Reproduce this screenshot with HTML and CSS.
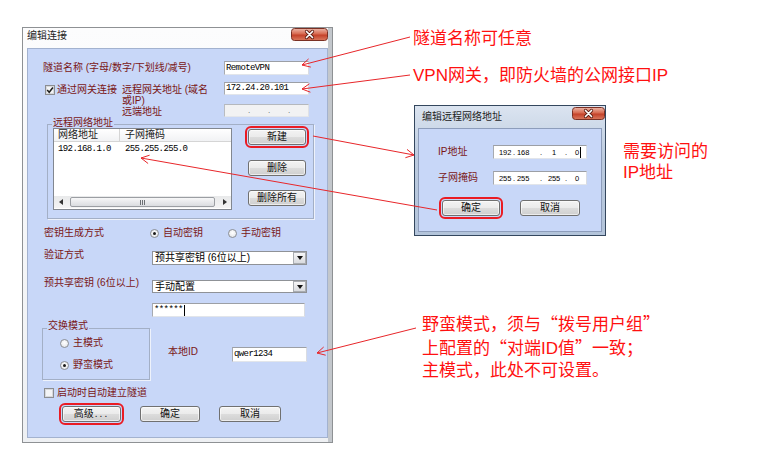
FILE: index.html
```html
<!DOCTYPE html>
<html lang="zh-CN">
<head>
<meta charset="utf-8">
<title>编辑连接</title>
<link rel="stylesheet" href="styles.css">
</head>
<body>
<div class="canvas">

  <section class="win win-main">
    <header class="titlebar">
      <span class="title">编辑连接</span>
      <span class="close close-main">
        <svg width="37" height="13" viewBox="0 0 37 13">
          <defs>
            <linearGradient id="cg1" x1="0" y1="0" x2="0" y2="1">
              <stop offset="0" stop-color="#ecb7a9"/>
              <stop offset="0.45" stop-color="#d86a50"/>
              <stop offset="0.55" stop-color="#c4422a"/>
              <stop offset="1" stop-color="#db7a5f"/>
            </linearGradient>
          </defs>
          <rect x="0.5" y="0.5" width="36" height="12" rx="3" fill="url(#cg1)" stroke="#7a3024"/>
          <path d="M15.5 3.5 L21.5 9.5 M21.5 3.5 L15.5 9.5" stroke="#5b1c12" stroke-width="3.2" stroke-linecap="round"/>
          <path d="M15.5 3.5 L21.5 9.5 M21.5 3.5 L15.5 9.5" stroke="#fff" stroke-width="1.7" stroke-linecap="round"/>
        </svg>
      </span>
    </header>

    <div class="panel">
      <div class="top-grid">
        <div class="lbl l-name">隧道名称 (字母/数字/下划线/减号)</div>
        <div class="field mono f-name">RemoteVPN</div>
        <div class="check-line r-gw">
          <span class="chk">
            <svg width="10" height="10" viewBox="0 0 10 10"><rect x="0.5" y="0.5" width="9" height="9" fill="#fff" stroke="#8b8d91"/><rect x="1.5" y="1.5" width="7" height="7" fill="#f3f4f6" stroke="#d6d8dc"/><path d="M2.2 5 L4.2 7.3 L7.9 2.5" fill="none" stroke="#1d1d1d" stroke-width="1.5"/></svg>
          </span>
          <span class="lbl">通过网关连接</span>
        </div>
        <div class="lbl l-gw">远程网关地址 (域名<br>或IP)<br>远端地址</div>
        <div class="field mono f-gw">172.24.20.101</div>
        <div class="field f-remote"><span>.</span><span>.</span><span>.</span></div>
      </div>

      <fieldset class="grp grp-net">
        <legend>远程网络地址</legend>
        <div class="net-body">
          <div class="listview">
            <div class="lv-head"><span class="c1">网络地址</span><span class="c2">子网掩码</span></div>
            <div class="lv-row mono"><span class="c1">192.168.1.0</span><span class="c2">255.255.255.0</span></div>
            <div class="lv-space"></div>
            <div class="hscroll">
              <span class="sb-btn"><svg width="4" height="6" viewBox="0 0 4 6"><path d="M4 0 L0 3 L4 6 Z" fill="#333"/></svg></span>
              <span class="sb-thumb"><svg width="6" height="5" viewBox="0 0 6 5"><path d="M0.5 0 V5 M2.5 0 V5 M4.5 0 V5" stroke="#6d7075" stroke-width="1"/></svg></span>
              <span class="sb-btn"><svg width="4" height="6" viewBox="0 0 4 6"><path d="M0 0 L4 3 L0 6 Z" fill="#333"/></svg></span>
            </div>
          </div>
          <div class="btn-col">
            <button class="btn b-new hl">新建</button>
            <button class="btn b-del">删除</button>
            <button class="btn b-delall">删除所有</button>
          </div>
        </div>
      </fieldset>

      <div class="key-grid">
        <div class="lbl k-l1">密钥生成方式</div>
        <div class="k-radios">
          <span class="radio"><span class="rb on"></span><span class="lbl">自动密钥</span></span>
          <span class="radio r-manual"><span class="rb"></span><span class="lbl">手动密钥</span></span>
        </div>
        <div class="lbl k-l2">验证方式</div>
        <div class="select k-sel1">
          <span class="val">预共享密钥 (6位以上)</span>
          <span class="arrow"><svg width="6" height="4" viewBox="0 0 6 4"><path d="M0 0 H6 L3 4 Z" fill="#111"/></svg></span>
        </div>
        <div class="lbl k-l3">预共享密钥 (6位以上)</div>
        <div class="select k-sel2">
          <span class="val">手动配置</span>
          <span class="arrow"><svg width="6" height="4" viewBox="0 0 6 4"><path d="M0 0 H6 L3 4 Z" fill="#111"/></svg></span>
        </div>
        <div class="field mono k-pw">******<i class="caret"></i></div>
      </div>

      <div class="mode-row">
        <fieldset class="grp grp-mode">
          <legend>交换模式</legend>
          <span class="radio m1"><span class="rb"></span><span class="lbl">主模式</span></span>
          <span class="radio m2"><span class="rb on"></span><span class="lbl">野蛮模式</span></span>
        </fieldset>
        <div class="lbl l-local">本地ID</div>
        <div class="field mono f-local">qwer1234</div>
      </div>

      <div class="check-line auto-row">
        <span class="chk">
          <svg width="10" height="10" viewBox="0 0 10 10"><rect x="0.5" y="0.5" width="9" height="9" fill="#fff" stroke="#8b8d91"/><rect x="1.5" y="1.5" width="7" height="7" fill="#f3f4f6" stroke="#d6d8dc"/></svg>
        </span>
        <span class="lbl">启动时自动建立隧道</span>
      </div>

      <div class="btn-row">
        <button class="btn w59 hl">高级<span class="dots">...</span></button>
        <button class="btn w60">确定</button>
        <button class="btn w62">取消</button>
      </div>
    </div>
  </section>

  <section class="win win-sub">
    <header class="titlebar sub-titlebar">
      <span class="title">编辑远程网络地址</span>
      <span class="close close-sub">
        <svg width="33" height="13" viewBox="0 0 33 13">
          <defs>
            <linearGradient id="cg2" x1="0" y1="0" x2="0" y2="1">
              <stop offset="0" stop-color="#ecb7a9"/>
              <stop offset="0.45" stop-color="#d86a50"/>
              <stop offset="0.55" stop-color="#c4422a"/>
              <stop offset="1" stop-color="#db7a5f"/>
            </linearGradient>
          </defs>
          <rect x="0.5" y="0.5" width="32" height="12" rx="3" fill="url(#cg2)" stroke="#7a3024"/>
          <path d="M13.5 3.5 L19.5 9.5 M19.5 3.5 L13.5 9.5" stroke="#5b1c12" stroke-width="3.2" stroke-linecap="round"/>
          <path d="M13.5 3.5 L19.5 9.5 M19.5 3.5 L13.5 9.5" stroke="#fff" stroke-width="1.7" stroke-linecap="round"/>
        </svg>
      </span>
    </header>
    <div class="panel sub-panel">
      <div class="sub-row">
        <span class="lbl">IP地址</span>
        <div class="field ipbox"><span class="o o1">192</span><span class="d">.</span><span class="o o2">168</span><span class="d d2">.</span><span class="o o3">1</span><span class="d">.</span><span class="o o4">0<i class="caret"></i></span></div>
      </div>
      <div class="sub-row">
        <span class="lbl">子网掩码</span>
        <div class="field ipbox"><span class="o o1">255</span><span class="d">.</span><span class="o o2">255</span><span class="d d2">.</span><span class="o o3">255</span><span class="d">.</span><span class="o o4">0</span></div>
      </div>
      <div class="sub-btns">
        <button class="btn hl">确定</button>
        <button class="btn w60 b-cancel">取消</button>
      </div>
    </div>
  </section>

  <div class="note n1">隧道名称可任意</div>
  <div class="note n2">VPN网关，即防火墙的公网接口IP</div>
  <div class="note n3">需要访问的<br>IP地址</div>
  <div class="note n4">野蛮模式，须与<span class="q">“</span>拨号用户组<span class="q">”</span><br>上配置的<span class="q">“</span>对端ID值<span class="q">”</span>一致；<br>主模式，此处不可设置。</div>

  <svg class="arrows" width="758" height="452" viewBox="0 0 758 452">
    <g fill="none" stroke="#e8262a" stroke-width="1">
      <path d="M410 37 L302 65"/>
      <path d="M310.8 67.1 L302 65 L308.6 58.9"/>
      <path d="M410 75 L302 89"/>
      <path d="M310.4 92.2 L302 89 L309.3 83.8"/>
      <path d="M313 136 L414 155"/>
      <path d="M407 149.4 L414 155 L405.4 157.7"/>
      <path d="M437 210 L141 158"/>
      <path d="M148.1 163.5 L141 158 L149.6 155.2"/>
      <path d="M416 328 L317 353"/>
      <path d="M325.7 355.2 L317 353 L323.7 347"/>
    </g>
  </svg>

</div>
</body>
</html>
```

FILE: styles.css
```css
* { box-sizing: border-box; }
html, body { margin: 0; padding: 0; }
body {
  width: 758px;
  height: 452px;
  overflow: hidden;
  background: #fff;
  font-family: "Liberation Sans", "Noto Sans CJK SC", sans-serif;
  font-size: 10px;
  color: #000;
}
.canvas { position: relative; width: 758px; height: 452px; }

/* windows on the desktop */
.win { position: absolute; display: flex; flex-direction: column; }
.win-main {
  left: 22px; top: 27px; width: 311px; height: 416px;
  padding: 0 4px 4px;
  border: 1px solid #8e9194;
  background: linear-gradient(#fcfcfd, #eef0f3);
  box-shadow: inset -4px 0 0 #c3c7cc;
}
.titlebar {
  flex: none;
  height: 20px;
  display: flex;
  justify-content: space-between;
  align-items: flex-start;
}
.title { font-size: 10px; line-height: 16px; color: #1e1e1e; white-space: nowrap; }
.close { display: block; height: 13px; }
.close svg { display: block; }
.close-main { width: 37px; }

.panel { flex: 1; background: #c8d7f8; border: 1px solid #a3b2cf; }

.lbl { color: #7a1616; font-size: 10px; line-height: 12px; white-space: nowrap; }
.mono { font-family: "Liberation Mono", monospace; font-size: 9px; letter-spacing: -0.6px; color: #000; }

.field {
  display: flex;
  align-items: center;
  white-space: nowrap;
  overflow: hidden;
  background: #fff;
  border: 1px solid;
  border-color: #9c9fa5 #d9dce2 #e2e5ea #a7aab0;
  padding-left: 1px;
  line-height: 11px;
}

/* top section */
.top-grid {
  display: grid;
  grid-template-columns: 79px 102px 85px;
  grid-template-rows: 14px 7px 13px 9px 13px;
  margin: 12px 0 0 15px;
}
.l-name { grid-row: 1; grid-column: 1 / 3; align-self: center; }
.f-name { grid-row: 1; grid-column: 3; }
.r-gw { grid-row: 3; grid-column: 1; }
.l-gw { grid-row: 3 / 6; grid-column: 2; line-height: 11.2px; padding-top: 1.5px; }
.f-gw { grid-row: 3; grid-column: 3; }
.f-remote {
  grid-row: 5; grid-column: 3;
  background: #f2f2f3;
  border-color: #b5b8bd #dfe1e5 #e4e6ea #b9bcc1;
  padding-left: 23px;
  align-items: flex-end;
}
.f-remote span { width: 21px; font-size: 8px; line-height: 10px; color: #555; }

.check-line { display: flex; align-items: center; gap: 2px; }
.r-gw { padding: 2px 0 0 2px; }
.chk { display: block; width: 10px; height: 10px; flex: none; }
.chk svg { display: block; }

/* group boxes */
.grp {
  margin: 0;
  min-width: 0;
  border: 1px solid #a3afc6;
  box-shadow: 1px 1px 0 #eef2fb;
}
.grp legend {
  padding: 0 1px;
  margin-left: -1px;
  font-size: 10px;
  line-height: 12px;
  color: #7a1616;
  white-space: nowrap;
}
.grp-net { margin: 1px 0 0 19px; width: 267px; padding: 0 7px 8px 5px; }
.grp-net legend { line-height: 10px; padding-bottom: 2px; }
.net-body { display: flex; margin-top: -2px; }

.listview {
  flex: none;
  width: 179px;
  height: 82px;
  border: 1px solid #828790;
  background: #fff;
  display: flex;
  flex-direction: column;
}
.lv-head {
  display: flex;
  height: 13px;
  border-bottom: 1px solid #d5d5d5;
  background: linear-gradient(#fff, #f1f2f4);
  color: #1a1a1a;
  font-size: 10px;
  line-height: 12px;
}
.lv-head .c1 { width: 66px; border-right: 1px solid #d5d5d5; padding-left: 4px; }
.lv-head .c2 { padding-left: 5px; }
.lv-row { display: flex; margin-top: 1px; height: 12px; line-height: 12px; }
.lv-row .c1 { width: 66px; padding-left: 4px; }
.lv-row .c2 { padding-left: 5px; }
.lv-space { flex: 1; }
.hscroll {
  height: 12px;
  margin-bottom: 1px;
  display: flex;
  align-items: center;
  background: linear-gradient(#e8e9ea, #f4f4f5);
}
.sb-btn { width: 13px; height: 12px; display: flex; align-items: center; justify-content: center; flex: none; }
.sb-btn svg, .sb-thumb svg, .arrow svg { display: block; }
.sb-thumb {
  flex: 1;
  margin: 0 3px;
  height: 10px;
  border: 1px solid #9b9ea3;
  border-radius: 2px;
  background: linear-gradient(#f7f7f8, #dadce0);
  display: flex;
  align-items: center;
  justify-content: center;
}

/* buttons */
.btn {
  display: block;
  width: 58px;
  height: 16px;
  margin: 0;
  padding: 0;
  font-family: inherit;
  font-size: 10px;
  line-height: 14px;
  color: #111;
  text-align: center;
  border: 1px solid #707070;
  border-radius: 3px;
  background: linear-gradient(#f3f3f3, #ebebeb 48%, #dcdcdc 52%, #cfcfcf);
  box-shadow: inset 0 0 0 1px rgba(255, 255, 255, 0.6);
}
.hl { outline: 2px solid #ea1c24; outline-offset: 1px; }
.btn-col { display: flex; flex-direction: column; margin-left: 16px; }
.b-new { margin-top: 1px; }
.b-del { margin-top: 15px; }
.b-delall { margin-top: 14px; }
.dots { letter-spacing: 2px; margin-left: 1px; }

/* key section */
.key-grid {
  display: grid;
  grid-template-columns: 106px 157px;
  grid-template-rows: 14px 11px 14px 15px 13px 10px 14px;
  margin: 7px 0 0 16px;
}
.k-l1 { grid-row: 1; grid-column: 1; align-self: center; }
.k-radios { grid-row: 1; grid-column: 2; display: flex; align-items: center; }
.k-l2 { grid-row: 3; grid-column: 1; margin-top: -2px; }
.k-sel1 { grid-row: 3; grid-column: 2; }
.k-l3 { grid-row: 5; grid-column: 1; margin-top: -3px; }
.k-sel2 { grid-row: 5; grid-column: 2; }
.k-pw { grid-row: 7; grid-column: 2; margin-left: 2px; width: 153px; }

.radio { display: flex; align-items: center; gap: 4px; height: 12px; }
.r-manual { margin-left: 25px; }
.rb {
  flex: none;
  width: 9px;
  height: 9px;
  border-radius: 50%;
  border: 1px solid #8b8e93;
  background: radial-gradient(circle at 50% 40%, #fff, #dfe1e5);
  display: flex;
  align-items: center;
  justify-content: center;
}
.rb.on::after { content: ""; width: 3px; height: 3px; border-radius: 50%; background: #1a1a1a; }

.select {
  display: flex;
  margin-left: 2px;
  width: 155px;
  background: #fff;
  border: 1px solid #8f9297;
}
.select .val { flex: 1; padding-left: 2px; line-height: 12px; font-size: 10px; color: #000; white-space: nowrap; }
.select .arrow {
  width: 13px;
  border: 1px solid #a9acb1;
  background: linear-gradient(#f6f6f7, #d9dbdf);
  display: flex;
  align-items: center;
  justify-content: center;
}
.caret { display: inline-block; width: 1px; height: 11px; background: #000; margin-left: 1px; }

/* exchange mode */
.mode-row { display: flex; align-items: flex-start; margin: 3px 0 0 14px; }
.grp-mode { width: 108px; padding: 0 0 8px 5px; }
.grp-mode legend { padding: 0 1px 4px; }
.m1 { margin: 1px 0 0 12px; }
.m2 { margin: 10px 0 0 12px; }
.l-local { margin: 26px 0 0 18px; width: 64px; }
.f-local { margin-top: 27px; width: 75px; height: 15px; }

.auto-row { gap: 3px; height: 12px; margin: 7px 0 0 16px; }

.btn-row { display: flex; margin: 7px 0 0 34px; }
.w59 { width: 59px; }
.w60 { width: 60px; }
.w62 { width: 62px; }
.btn-row .btn + .btn { margin-left: 19px; }

/* second dialog */
.win-sub {
  left: 414px; top: 105px; width: 192px; height: 131px;
  padding: 0 3px 3px;
  border: 1px solid #34475e;
  background: linear-gradient(#dbe4f0, #bccbdf 40%, #b3c4da);
}
.sub-titlebar { height: 22px; align-items: center; }
.sub-titlebar .title { margin-left: 4px; }
.close-sub { width: 33px; align-self: flex-start; margin: 1px -3px 0 0; }
.sub-panel { border-color: #8d9dbb; }
.sub-row { display: flex; align-items: center; height: 14px; margin: 16px 0 0 19px; }
.sub-row + .sub-row { margin-top: 12px; }
.sub-row .lbl { width: 55px; }
.ipbox {
  width: 94px;
  height: 14px;
  padding-left: 5px;
  font-family: "Liberation Sans", sans-serif;
  font-size: 7.5px;
  letter-spacing: -0.1px;
  color: #000;
}
.o { display: block; }
.o1 { width: 14px; }
.o2 { width: 14px; padding-left: 1px; }
.d { display: block; width: 3px; }
.d2 { margin-left: 10px; }
.o3 { width: 22px; text-align: center; }
.o4 { display: flex; align-items: center; padding-left: 7px; }
.sub-btns { display: flex; margin: 15px 0 0 23px; }
.b-cancel { margin-left: 20px; }

/* annotations */
.note {
  position: absolute;
  color: #ff1010;
  font-size: 17px;
  line-height: 20px;
  white-space: nowrap;
}
.note .q { font-family: "Noto Sans CJK SC", sans-serif; }
.n1 { left: 413px; top: 29px; }
.n2 { left: 413px; top: 66px; }
.n3 { left: 623px; top: 142px; line-height: 20.5px; }
.n4 { left: 422px; top: 312px; line-height: 22px; }

.arrows { position: absolute; left: 0; top: 0; pointer-events: none; }
```
